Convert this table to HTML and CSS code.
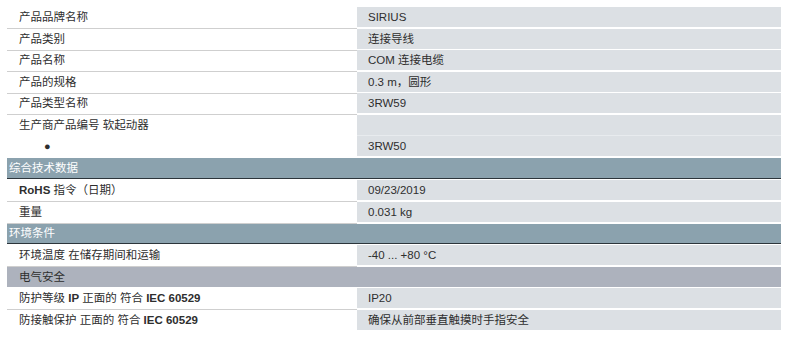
FILE: index.html
```html
<!DOCTYPE html>
<html lang="zh-CN">
<head>
<meta charset="utf-8">
<title>产品数据</title>
<link rel="stylesheet" href="styles.css">
</head>
<body>
<div class="sheet">
  <div class="row"><div class="label">产品品牌名称</div><div class="value">SIRIUS</div></div>
  <div class="row"><div class="label">产品类别</div><div class="value">连接导线</div></div>
  <div class="row"><div class="label">产品名称</div><div class="value">COM 连接电缆</div></div>
  <div class="row"><div class="label">产品的规格</div><div class="value">0.3 m，圆形</div></div>
  <div class="row"><div class="label">产品类型名称</div><div class="value">3RW59</div></div>
  <div class="row row-open"><div class="label">生产商产品编号 软起动器</div><div class="value value-faint"></div></div>
  <div class="row row-last"><div class="label bullet">●</div><div class="value">3RW50</div></div>
  <div class="head">综合技术数据</div>
  <div class="row"><div class="label"><b>RoHS</b> 指令（日期）</div><div class="value">09/23/2019</div></div>
  <div class="row"><div class="label">重量</div><div class="value">0.031 kg</div></div>
  <div class="head">环境条件</div>
  <div class="row"><div class="label">环境温度 在储存期间和运输</div><div class="value">-40 ... +80 °C</div></div>
  <div class="subhead">电气安全</div>
  <div class="row"><div class="label">防护等级 <b>IP</b> 正面的 符合 <b>IEC 60529</b></div><div class="value">IP20</div></div>
  <div class="row row-end"><div class="label">防接触保护 正面的 符合 <b>IEC 60529</b></div><div class="value">确保从前部垂直触摸时手指安全</div></div>
</div>
</body>
</html>
```

FILE: styles.css
```css
html, body {
  margin: 0;
  padding: 0;
  background: #ffffff;
}

body {
  font-family: "Liberation Sans", "Noto Sans CJK SC", sans-serif;
  font-size: 11.5px;
  color: #2e2e2e;
}

.sheet {
  padding: 7px 0 0 7px;
  width: 774px;
}

.row {
  display: grid;
  grid-template-columns: 350px 424px;
  height: 21.5px;
}

.label {
  border-bottom: 1px solid #cfcfcf;
  padding-left: 12px;
  line-height: 20px;
  white-space: nowrap;
}

.value {
  background: #dce0e4;
  border-bottom: 2px solid #ffffff;
  padding-left: 11px;
  line-height: 20px;
  white-space: nowrap;
}

.row-open .label {
  border-bottom-color: transparent;
}

.row-open .value {
  border-bottom: 1px solid #e8ebee;
}

.row-last {
  height: 20px;
  margin-bottom: 2px;
}

.row-last .label {
  border-bottom: none;
}

.row-last .value {
  border-bottom: none;
}

.bullet {
  padding-left: 37px;
  font-size: 11px;
}

b {
  font-weight: bold;
}

.head {
  height: 20px;
  line-height: 20px;
  background: #8ba2ae;
  color: #ffffff;
  padding-left: 2px;
  border-bottom: 1px solid #2c353b;
  margin-bottom: 1px;
  margin-right: -2px;
  width: 772px;
}

.subhead {
  height: 20px;
  line-height: 20px;
  background: #adb2bd;
  color: #2e2e2e;
  padding-left: 12px;
  margin-bottom: 1.5px;
  width: 762px;
}

.row-end .label {
  border-bottom: none;
}
```
